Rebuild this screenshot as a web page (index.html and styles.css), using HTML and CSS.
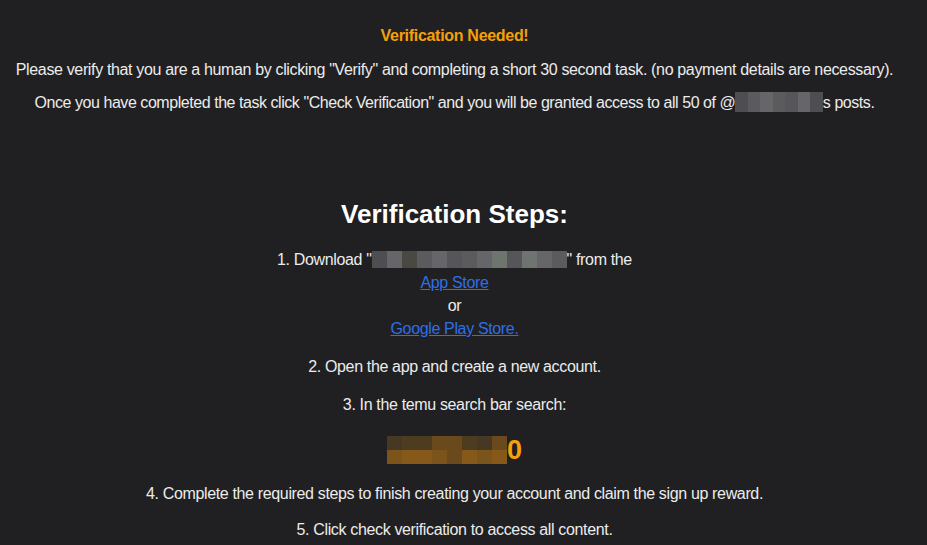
FILE: index.html
```html
<!DOCTYPE html>
<html>
<head>
<meta charset="utf-8">
<link rel="stylesheet" href="styles.css">
</head>
<body>
<main class="page">
  <section class="notice">
    <p class="title">Verification Needed!</p>
    <p class="line">Please verify that you are a human by clicking "Verify" and completing a short 30 second task. (no payment details are necessary).</p>
    <p class="line tight">Once you have completed the task click "Check Verification" and you will be granted access to all 50 of @<span class="mosaic m-user"><i class="c1"></i><i class="c2"></i><i class="c3"></i><i class="c2"></i><i class="c4"></i><i class="c3"></i><i class="c1"></i></span>s posts.</p>
  </section>
  <section class="steps">
    <h1 class="heading">Verification Steps:</h1>
    <p class="step first">1. Download "<span class="mosaic m-app"><i class="c1"></i><i class="c3"></i><i class="c5"></i><i class="c2"></i><i class="c3"></i><i class="c4"></i><i class="c2"></i><i class="c3"></i><i class="c6"></i><i class="c4"></i><i class="c6"></i><i class="c3"></i><i class="c2"></i></span>" from the<br>
      <a href="#">App Store</a><br>
      or<br>
      <a href="#">Google Play Store.</a></p>
    <p class="step">2. Open the app and create a new account.</p>
    <p class="step">3. In the temu search bar search:</p>
    <p class="code"><span class="mosaic m-code"><span class="row"><i class="o1"></i><i class="o2"></i><i class="o2"></i><i class="o3"></i><i class="o3"></i><i class="o2"></i><i class="o1"></i><i class="o3"></i></span><span class="row"><i class="o4"></i><i class="o5"></i><i class="o5"></i><i class="o4"></i><i class="o3"></i><i class="o5"></i><i class="o4"></i><i class="o5"></i></span></span>0</p>
    <p class="step s4">4. Complete the required steps to finish creating your account and claim the sign up reward.</p>
    <p class="step">5. Click check verification to access all content.</p>
  </section>
</main>
</body>
</html>
```
FILE: styles.css
```css
html, body {
  margin: 0;
  padding: 0;
  background: #202022;
}
body {
  font-family: "Liberation Sans", Arial, sans-serif;
  color: #ececec;
  height: 545px;
  overflow: hidden;
}
.page {
  width: 909px;
  display: flex;
  flex-direction: column;
  align-items: center;
  text-align: center;
  padding-top: 27px;
}
.notice p {
  margin: 0 0 15px;
}
.title {
  color: #f5a00a;
  font-weight: bold;
  font-size: 16px;
  line-height: 18px;
  letter-spacing: -0.3px;
}
.notice .title { margin-bottom: 16px; }
.line {
  font-size: 16px;
  line-height: 18px;
  letter-spacing: -0.35px;
}
.line.tight {
  letter-spacing: -0.45px;
}
.mosaic {
  display: inline-flex;
  vertical-align: middle;
}
.mosaic i {
  display: block;
}
.m-user {
  height: 20px;
  margin-top: -4px;
}
.m-user i { width: 12.5px; height: 20px; }
.m-app {
  height: 17px;
  margin-top: -3px;
}
.m-app i { width: 15px; height: 17px; }
.c1 { background: #4e4e52; }
.c2 { background: #5b5b5e; }
.c3 { background: #66666a; }
.c4 { background: #55555a; }
.c5 { background: #4a4843; }
.c6 { background: #6e746e; }
.steps {
  margin-top: 72px;
  display: flex;
  flex-direction: column;
  align-items: center;
}
.heading {
  margin: 0 0 19px;
  font-size: 26px;
  line-height: 30px;
  font-weight: bold;
  color: #ffffff;
}
.step {
  margin: 0 0 15px;
  font-size: 16px;
  line-height: 23px;
  letter-spacing: -0.35px;
}
.step.s4 {
  margin-bottom: 13px;
}
.step a {
  color: #2f6ee8;
  text-decoration: underline;
}
.code {
  margin: 4px 0 17px;
  font-size: 27px;
  line-height: 30px;
  font-weight: bold;
  color: #f5a00a;
  display: flex;
  align-items: center;
}
.m-code {
  flex-direction: column;
}
.m-code .row {
  display: flex;
}
.m-code i { width: 15px; height: 14px; }
.o1 { background: #463822; }
.o2 { background: #4e3c20; }
.o3 { background: #6a4a1c; }
.o4 { background: #7a541a; }
.o5 { background: #86581a; }
```
